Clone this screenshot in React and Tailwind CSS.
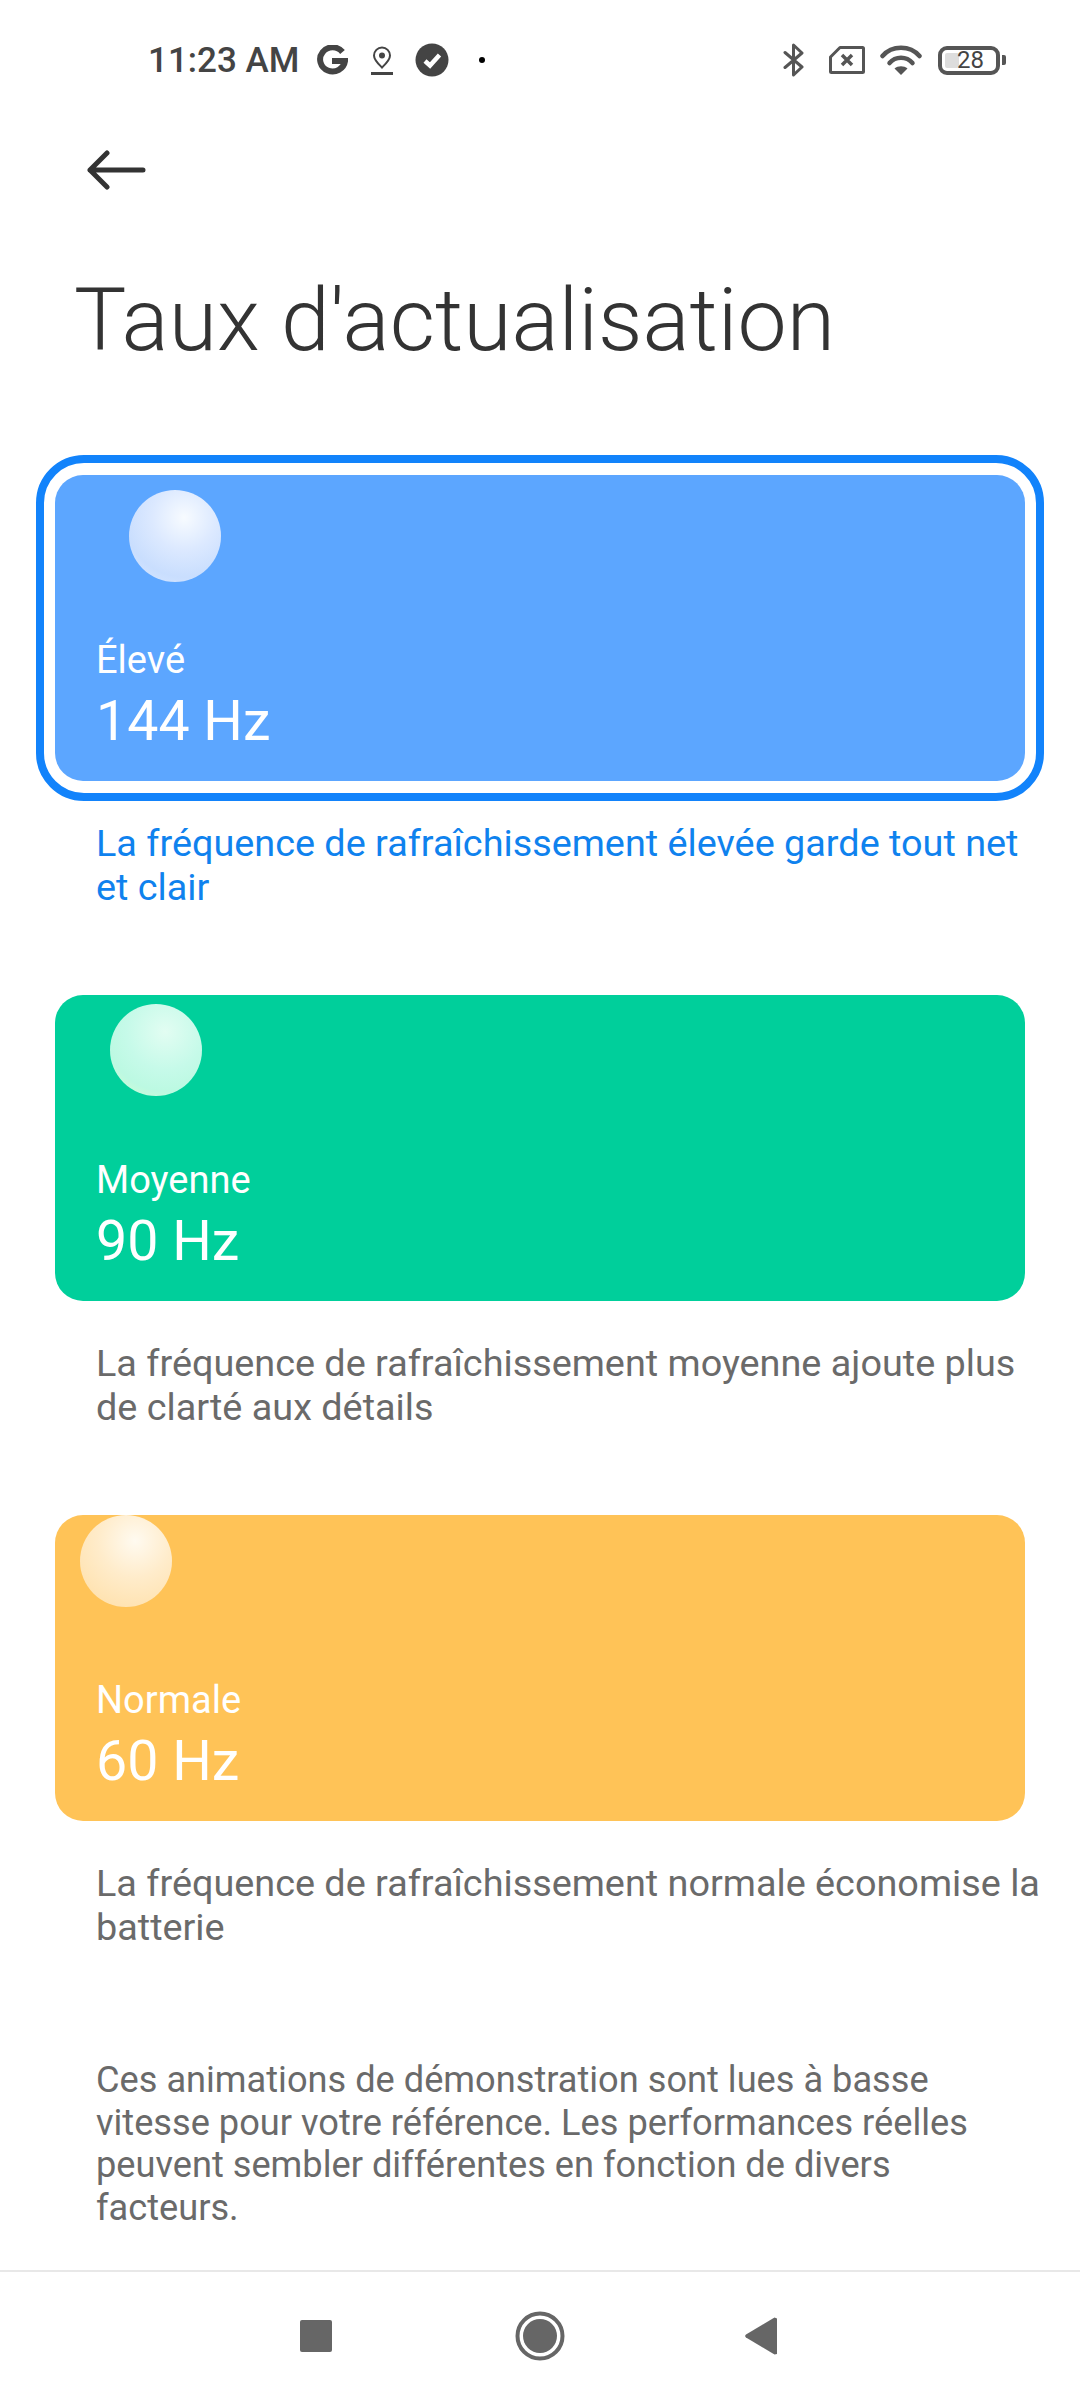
import React from 'react';

const rates = [
  {
    label: 'Élevé',
    hz: '144 Hz',
    text: 'La fréquence de rafraîchissement élevée garde tout net et clair',
    card: 'bg-[#5ca6ff]',
    ball: 'left-[74px] top-[15px] bg-[radial-gradient(circle_at_60%_30%,#f7fbff_0%,#dce9ff_38%,#c9defe_70%,#dceaff_100%)]',
    wrap: 'border-[#1283fb]',
    desc: 'text-[#0f82ee]',
  },
  {
    label: 'Moyenne',
    hz: '90 Hz',
    text: 'La fréquence de rafraîchissement moyenne ajoute plus de clarté aux détails',
    card: 'bg-[#00cf9b]',
    ball: 'left-[55px] top-[9px] bg-[radial-gradient(circle_at_60%_30%,#e2fdf2_0%,#c6fae9_45%,#bcf9e2_70%,#dcfdd0_100%)]',
    wrap: 'border-transparent',
    desc: 'text-[#6a6a6a]',
  },
  {
    label: 'Normale',
    hz: '60 Hz',
    text: 'La fréquence de rafraîchissement normale économise la batterie',
    card: 'bg-[#ffc357]',
    ball: 'left-[25px] top-0 bg-[radial-gradient(circle_at_60%_28%,#fffaf0_0%,#ffeccb_42%,#ffe3b2_78%,#ffeac9_100%)]',
    wrap: 'border-transparent',
    desc: 'text-[#6a6a6a]',
  },
];

function StatusBar() {
  return (
    <div className="h-[120px] flex items-center justify-between pl-[148px] pr-[74px] text-[#444444]">
      <div className="flex items-center">
        <span className="text-[35px] font-medium leading-none w-[168px] whitespace-nowrap">11:23 AM</span>
        <svg width="32" height="30" viewBox="0 0 32 30" fill="none">
          <path d="M26.500 7A12.500 12 0 1 0 29 16H16" stroke="#444444" strokeWidth="6" />
        </svg>
        <svg className="ml-[23px]" width="22" height="29" viewBox="0 0 22 29" fill="none">
          <path d="M11 21.500C7 17.500 3 14 3 9.500a8 8 0 0 1 16 0c0 4.500-4 8-8 12Z" stroke="#444444" strokeWidth="2" />
          <circle cx="11" cy="9.500" r="3" fill="#444444" />
          <rect x="0" y="26" width="22" height="3" fill="#444444" />
        </svg>
        <svg className="ml-[22px]" width="34" height="34" viewBox="0 0 34 34">
          <circle cx="17" cy="17" r="16.500" fill="#444444" />
          <path d="M10 18l5 4.500L24.500 12" stroke="#ffffff" strokeWidth="4.500" fill="none" />
        </svg>
        <span className="ml-[30px] w-[6px] h-[6px] rounded-full bg-black" />
      </div>
      <div className="flex items-center">
        <svg width="22" height="34" viewBox="0 0 22 34" fill="none">
          <path d="M2 9.500 19 24 10.500 32V2L19 10 2 24.500" stroke="#555555" strokeWidth="3" strokeLinejoin="round" strokeLinecap="round" />
        </svg>
        <svg className="ml-[24px]" width="36" height="28" viewBox="0 0 36 28" fill="none">
          <path d="M11 1.500h22.500a1 1 0 0 1 1 1v23a1 1 0 0 1-1 1H2.500a1 1 0 0 1-1-1V11Z" stroke="#555555" strokeWidth="3" strokeLinejoin="round" />
          <path d="M13 9l10 10M23 9 13 19" stroke="#555555" strokeWidth="3.500" />
        </svg>
        <svg className="ml-[15px]" width="42" height="30" viewBox="0 0 42 30" fill="none">
          <path d="M2.500 11C12 0 30 0 39.500 11" stroke="#555555" strokeWidth="4.500" strokeLinecap="round" />
          <path d="M9.500 18C15.500 11 26.500 11 32.500 18" stroke="#555555" strokeWidth="4.500" strokeLinecap="round" />
          <path d="M21 30l-6.500-6.500c3.500-3 9.500-3 13 0Z" fill="#555555" />
        </svg>
        <div className="ml-[16px] relative w-[62px] h-[29px] rounded-[9px] border-[4px] border-[#555555] flex items-center justify-center">
          <span className="absolute left-[3px] top-[3px] w-[14px] h-[15px] bg-[#dddddd] rounded-[2px]" />
          <span className="relative text-[24px] leading-none text-[#444444] ml-[3px]">28</span>
        </div>
        <span className="ml-[2px] w-[4px] h-[10px] rounded-r-[2px] bg-[#555555]" />
      </div>
    </div>
  );
}

function RateOption({ item }) {
  return (
    <div>
      <div className={`mx-[36px] w-[1008px] h-[346px] border-[8px] rounded-[48px] px-[11px] py-[12px] ${item.wrap}`}>
        <div className={`relative h-[306px] rounded-[28px] flex flex-col pl-[41px] pt-[163px] text-white ${item.card}`}>
          <span className={`absolute w-[92px] h-[92px] rounded-full ${item.ball}`} />
          <span className="text-[38px] leading-[44px]">{item.label}</span>
          <span className="text-[55.5px] leading-[62px] mt-[9px]">{item.hz}</span>
        </div>
      </div>
      <p className={`ml-[96px] mt-[20px] w-[960px] text-[37.8px] leading-[44px] ${item.desc}`}>{item.text}</p>
    </div>
  );
}

export default function App() {
  return (
    <div className="w-[1080px] h-[2400px] bg-white flex flex-col overflow-hidden font-['Roboto',sans-serif]">
      <StatusBar />
      <div className="pl-[87px] pt-[30px] h-[70px]">
        <svg width="60" height="40" viewBox="0 0 60 40" fill="none">
          <path d="M56 20H3M20 3 3 20l17 17" stroke="#333333" strokeWidth="5" strokeLinecap="round" strokeLinejoin="round" />
        </svg>
      </div>
      <h1 className="ml-[74px] mt-[78px] text-[87.8px] leading-[104px] font-light text-[#333333] whitespace-nowrap">
        Taux d'actualisation
      </h1>
      <div className="mt-[83px] flex flex-col gap-[66px]">
        {rates.map((item) => (
          <RateOption key={item.label} item={item} />
        ))}
      </div>
      <p className="ml-[96px] mt-[110px] w-[940px] text-[36.2px] leading-[42.5px] text-[#6a6a6a]">
        Ces animations de démonstration sont lues à basse vitesse pour votre référence. Les performances réelles peuvent sembler différentes en fonction de divers facteurs.
      </p>
      <div className="mt-auto h-[130px] border-t-2 border-[#e8e8e8] flex items-center">
        <span className="ml-[300px] w-[32px] h-[32px] rounded-[2px] bg-[#666666]" />
        <svg className="ml-[183px]" width="50" height="50" viewBox="0 0 50 50" fill="none">
          <circle cx="25" cy="25" r="22.500" stroke="#666666" strokeWidth="4" />
          <circle cx="25" cy="25" r="17" fill="#666666" />
        </svg>
        <svg className="ml-[180px]" width="32" height="38" viewBox="0 0 32 38" fill="none">
          <path d="M32 1.500V37L29.500 37.500 1 20.500a2 2 0 0 1 0-3L29.500 0.500Z" fill="#666666" />
        </svg>
      </div>
    </div>
  );
}
